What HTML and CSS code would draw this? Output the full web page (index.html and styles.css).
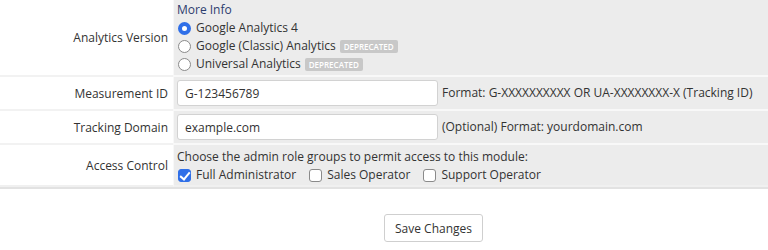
FILE: index.html
```html
<!DOCTYPE html>
<html lang="en">
<head>
    <meta charset="UTF-8">
    <title>Google Analytics</title>
    <link rel="stylesheet" href="styles.css">
</head>
<body>
    <div class="settings">
        <div class="row row-version">
            <div class="label">Analytics Version</div>
            <div class="value">
                <a href="#" class="more-info">More Info</a>
                <label class="option">
                    <input type="radio" name="version" checked>
                    Google Analytics 4
                </label>
                <label class="option">
                    <input type="radio" name="version">
                    Google (Classic) Analytics
                    <span class="badge">Deprecated</span>
                </label>
                <label class="option">
                    <input type="radio" name="version">
                    Universal Analytics
                    <span class="badge">Deprecated</span>
                </label>
            </div>
        </div>
        <div class="row">
            <div class="label">Measurement ID</div>
            <div class="value inline">
                <input type="text" class="text-input" value="G-123456789">
                <span class="hint">Format: G-XXXXXXXXXX OR UA-XXXXXXXX-X (Tracking ID)</span>
            </div>
        </div>
        <div class="row">
            <div class="label">Tracking Domain</div>
            <div class="value inline">
                <input type="text" class="text-input" value="example.com">
                <span class="hint">(Optional) Format: yourdomain.com</span>
            </div>
        </div>
        <div class="row row-access">
            <div class="label">Access Control</div>
            <div class="value">
                <div>Choose the admin role groups to permit access to this module:</div>
                <div class="checks">
                    <label class="option"><input type="checkbox" checked> Full Administrator</label>
                    <label class="option"><input type="checkbox"> Sales Operator</label>
                    <label class="option"><input type="checkbox"> Support Operator</label>
                </div>
            </div>
        </div>
    </div>

    <div class="actions">
        <button class="save-btn">Save Changes</button>
    </div>
</body>
</html>
```

FILE: styles.css
```css
* {
    margin: 0;
    padding: 0;
    box-sizing: border-box;
}

body {
    font-family: 'Open Sans', 'Noto Sans', sans-serif;
    font-size: 12px;
    color: #333;
    background: #fff;
}

.settings {
    border-bottom: 2px solid #e2e2e2;
}

.row {
    display: grid;
    grid-template-columns: 173px 1fr;
}

.row + .row {
    margin-top: 0;
}

.label {
    display: flex;
    align-items: center;
    justify-content: flex-end;
    padding-right: 5px;
    background: #fff;
    border-bottom: 2px solid #f2f2f2;
}

.value {
    background: #ececec;
    padding: 3px 4px 3px 3px;
    line-height: 18px;
    border-bottom: 2px solid #f8f8f8;
    border-left: 1px solid #f8f8f8;
}

.row-version .value {
    padding: 1px 4px 2px 3px;
}

.row-access .value {
    padding: 3px 4px 1px 3px;
}

.row:last-child .label,
.row:last-child .value {
    border-bottom-color: #f0f0f0;
}

.inline {
    display: flex;
    align-items: center;
    gap: 4px;
}

.more-info {
    display: block;
    color: #2c3d6e;
    text-decoration: none;
}

.option {
    display: flex;
    align-items: center;
    white-space: nowrap;
}

.option input {
    appearance: none;
    width: 13px;
    height: 13px;
    margin: 0 5px 0 1px;
    border: 1px solid #8a8a8a;
    background: #fff;
    flex-shrink: 0;
}

.option input[type="radio"] {
    border-radius: 50%;
}

.option input[type="radio"]:checked {
    border: 4px solid #2f6fe8;
    background: #fff;
}

.option input[type="checkbox"] {
    border-radius: 3px;
    position: relative;
}

.option input[type="checkbox"]:checked {
    background: #2f6fe8;
    border-color: #2f6fe8;
}

.option input[type="checkbox"]:checked::after {
    content: '';
    position: absolute;
    left: 3px;
    top: 0px;
    width: 4px;
    height: 8px;
    border: solid #fff;
    border-width: 0 2px 2px 0;
    transform: rotate(40deg);
}

.badge {
    display: inline-block;
    margin-left: 4px;
    padding: 0 4px;
    height: 13px;
    line-height: 13px;
    font-size: 8px;
    font-weight: 600;
    text-transform: uppercase;
    color: #fff;
    background: #c8c8c8;
    border-radius: 2px;
}

.text-input {
    width: 261px;
    height: 26px;
    padding: 0 7px;
    font-family: inherit;
    font-size: 12px;
    color: #333;
    background: #fff;
    border: 1px solid #d2d2d2;
    border-radius: 3px;
}

.hint {
    white-space: nowrap;
}

.checks {
    display: flex;
    gap: 12px;
}

.actions {
    padding: 25px 0 0 384px;
}

.save-btn {
    height: 28px;
    padding: 0 10px;
    font-family: inherit;
    font-size: 12px;
    color: #333;
    background: #fff;
    border: 1px solid #cfcfcf;
    border-radius: 3px;
}
```
